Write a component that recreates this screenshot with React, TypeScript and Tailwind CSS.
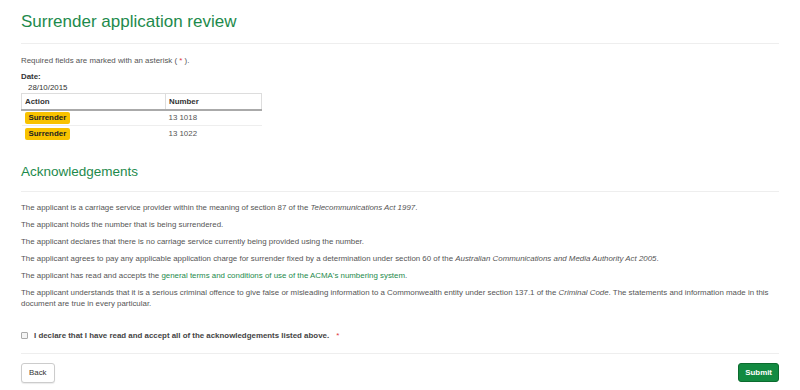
export default function App() {
  const rows = ["13 1018", "13 1022"];

  return (
    <div className="w-[800px] h-[390px] bg-white px-[21px] pt-[10px] text-[#555] text-[7.9px] leading-[11px] overflow-hidden" style={{ fontFamily: '"Liberation Sans", Arial, sans-serif' }}>
      <div className="w-[758px]">
        <h1 className="text-[17px] leading-[24px] text-[#1d8a4c]">Surrender application review</h1>
        <div className="mt-[9px] border-t border-[#eee]" />

        <p className="mt-[11px]">
          Required fields are marked with an asterisk ( <span className="text-[#e0383c]">*</span> ).
        </p>

        <div className="mt-[5px] font-bold text-[#333]">Date:</div>
        <div className="pl-[7px] text-[#333]">28/10/2015</div>

        <table className="w-[241px] border-collapse text-[#333]">
          <thead>
            <tr className="border border-[#ddd] border-b-2 border-b-[#aaa]">
              <th className="w-[144px] h-[16px] px-[3px] text-left font-bold border-r border-[#ddd]">Action</th>
              <th className="px-[3px] text-left font-bold">Number</th>
            </tr>
          </thead>
          <tbody>
            {rows.map((n, i) => (
              <tr key={n} className={i === 0 ? "border-b border-[#eee]" : ""}>
                <td className="h-[16px] px-[3px]">
                  <span className="inline-block rounded-[2px] bg-[#f8c200] px-[4px] leading-[12px] font-bold text-[#222]">Surrender</span>
                </td>
                <td className="px-[3px] text-[#555]">{n}</td>
              </tr>
            ))}
          </tbody>
        </table>

        <h2 className="mt-[21px] text-[13.5px] leading-[18px] text-[#1d8a4c]">Acknowledgements</h2>
        <div className="mt-[10px] border-t border-[#eee]" />

        <div className="mt-[10px] flex flex-col gap-[6px]">
          <p>The applicant is a carriage service provider within the meaning of section 87 of the <i>Telecommunications Act 1997</i>.</p>
          <p>The applicant holds the number that is being surrendered.</p>
          <p>The applicant declares that there is no carriage service currently being provided using the number.</p>
          <p>The applicant agrees to pay any applicable application charge for surrender fixed by a determination under section 60 of the <i>Australian Communications and Media Authority Act 2005</i>.</p>
          <p>The applicant has read and accepts the <a className="text-[#1d8a4c]">general terms and conditions of use of the ACMA's numbering system</a>.</p>
          <p>The applicant understands that it is a serious criminal offence to give false or misleading information to a Commonwealth entity under section 137.1 of the <i>Criminal Code</i>. The statements and information made in this document are true in every particular.</p>
        </div>

        <label className="mt-[21px] flex items-center gap-[6px] font-bold text-[#444]">
          <span className="w-[7px] h-[7px] border border-[#aaa] rounded-[1px] bg-[#f4f4f4]" />
          <span>I declare that I have read and accept all of the acknowledgements listed above.</span>
          <span className="text-[#e0383c] font-normal ml-[1px]">*</span>
        </label>
        <div className="mt-[12px] border-t border-[#eee]" />

        <div className="mt-[9px] flex justify-between items-start">
          <button className="h-[20px] px-[7px] border border-[#ccc] rounded-[3px] bg-white text-[#333] shadow-[0_1px_1px_rgba(0,0,0,0.08)]">Back</button>
          <button className="h-[19px] px-[6px] border border-[#0b6b2e] rounded-[3px] bg-[#128a41] font-bold text-white">Submit</button>
        </div>
      </div>
    </div>
  );
}
